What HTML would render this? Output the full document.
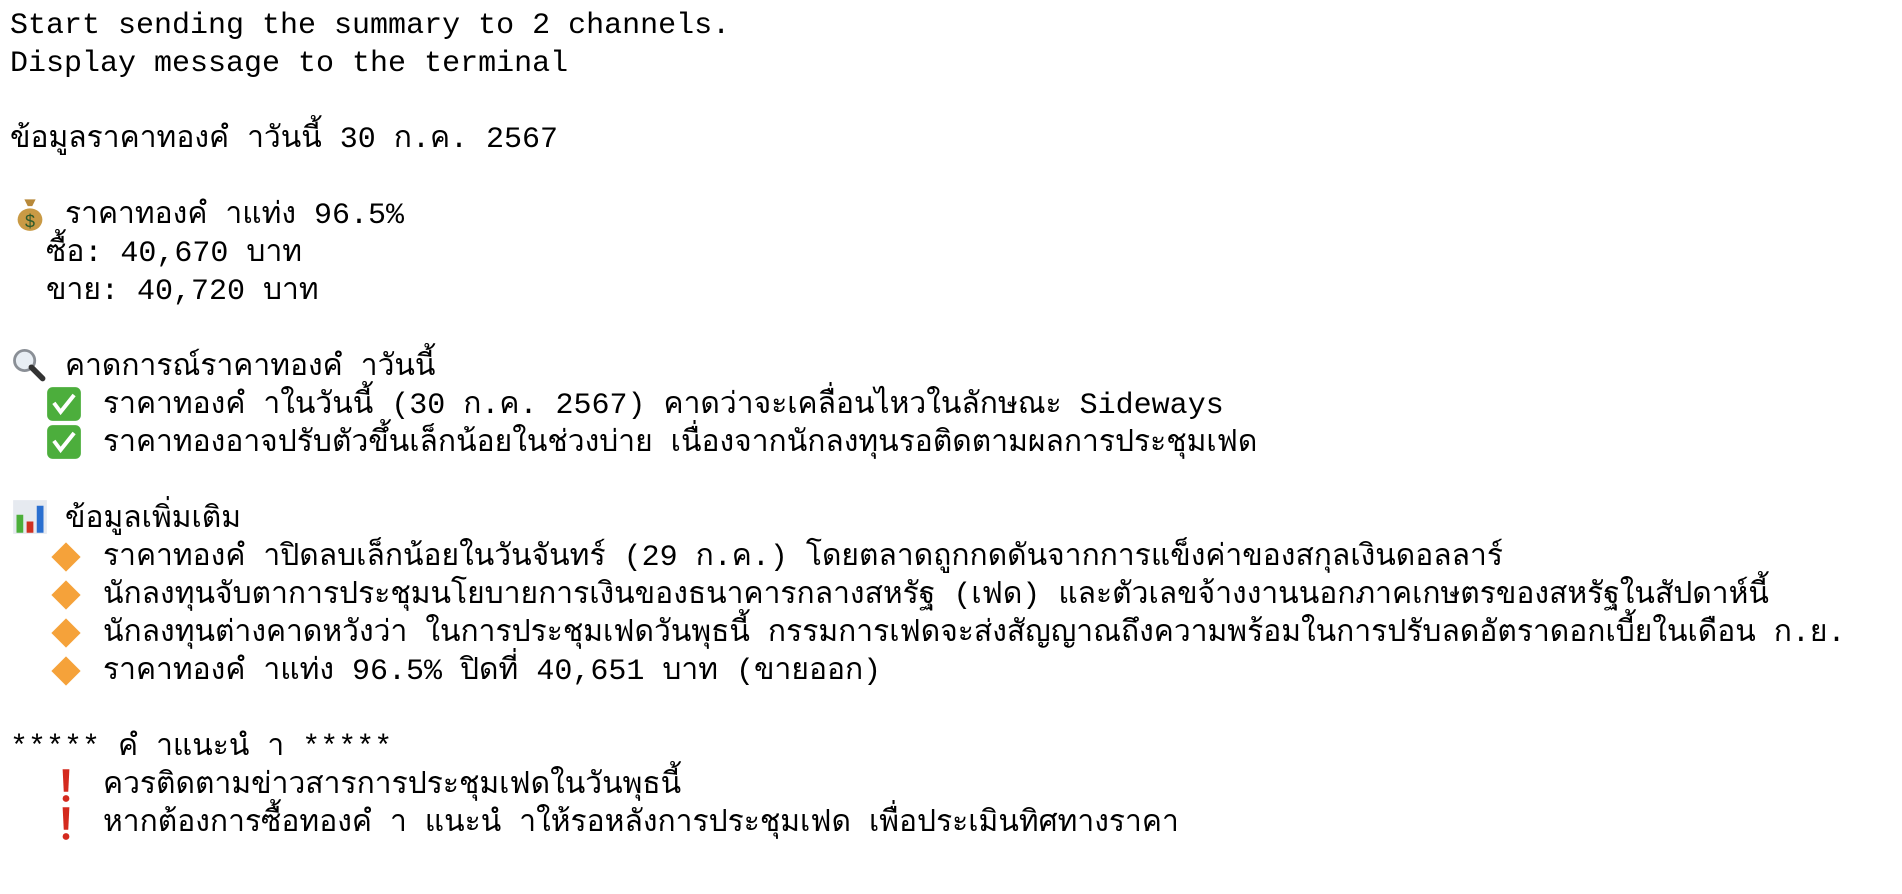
<!DOCTYPE html>
<html><head><meta charset="utf-8"><style>
html,body{margin:0;padding:0;background:#fff;width:1902px;height:894px;overflow:hidden}
.l{position:absolute;white-space:pre;font-family:"Liberation Mono","DejaVu Sans Mono","Noto Sans CJK SC",monospace;font-size:30px;line-height:38px;color:#000;height:38px}
.i{position:absolute;width:36px;height:36px}
</style></head><body>
<div class="l" style="left:10px;top:7px">Start sending the summary to 2 channels.</div>
<div class="l" style="left:10px;top:45px">Display message to the terminal</div>
<div class="l" style="left:10px;top:121px">ข้อมูลราคาทองคํ าวันนี้ 30 ก.ค. 2567</div>

<svg class="i" style="left:12px;top:196px" viewBox="0 0 32 32"><path d="M11 3h10l-3 6h-4z" fill="#b8893a"/><ellipse cx="16" cy="21" rx="11" ry="10" fill="#c99a45"/><text x="16" y="28" font-size="16" text-anchor="middle" fill="#2f5a2a" font-family="Liberation Sans">$</text></svg>
<div class="l" style="left:65px;top:197px">ราคาทองคํ าแท่ง 96.5%</div>
<div class="l" style="left:46px;top:235px">ซื้อ: 40,670 บาท</div>
<div class="l" style="left:46px;top:273px">ขาย: 40,720 บาท</div>

<svg class="i" style="left:10px;top:347px" viewBox="0 0 32 32"><circle cx="13" cy="12" r="9" fill="#e8eef4" stroke="#8a8f96" stroke-width="2.5"/><path d="M19 18l10 10" stroke="#333" stroke-width="5" stroke-linecap="round"/></svg>
<div class="l" style="left:65px;top:349px">คาดการณ์ราคาทองคํ าวันนี้</div>
<svg class="i" style="left:46px;top:386px" viewBox="0 0 32 32"><rect x="1" y="1" width="30" height="30" rx="5" fill="#4cae3c"/><path d="M7 15l6 8 12-15" stroke="#fff" stroke-width="3.5" fill="none"/></svg>
<div class="l" style="left:103px;top:387px">ราคาทองคํ าในวันนี้ (30 ก.ค. 2567) คาดว่าจะเคลื่อนไหวในลักษณะ Sideways</div>
<svg class="i" style="left:46px;top:424px" viewBox="0 0 32 32"><rect x="1" y="1" width="30" height="30" rx="5" fill="#4cae3c"/><path d="M7 15l6 8 12-15" stroke="#fff" stroke-width="3.5" fill="none"/></svg>
<div class="l" style="left:103px;top:425px">ราคาทองอาจปรับตัวขึ้นเล็กน้อยในช่วงบ่าย เนื่องจากนักลงทุนรอติดตามผลการประชุมเฟด</div>

<svg class="i" style="left:12px;top:499px" viewBox="0 0 32 32"><rect x="1" y="1" width="30" height="30" fill="#e6eaf0"/><rect x="4" y="14" width="6" height="16" fill="#4caf3a"/><rect x="13" y="20" width="6" height="10" fill="#d03020"/><rect x="22" y="6" width="6" height="24" fill="#2a6fd0"/></svg>
<div class="l" style="left:65px;top:501px">ข้อมูลเพิ่มเติม</div>
<svg class="i" style="left:48px;top:539px" viewBox="0 0 32 32"><path d="M16 3l13 13-13 13-13-13z" fill="#f5a23a"/></svg>
<div class="l" style="left:103px;top:539px">ราคาทองคํ าปิดลบเล็กน้อยในวันจันทร์ (29 ก.ค.) โดยตลาดถูกกดดันจากการแข็งค่าของสกุลเงินดอลลาร์</div>
<svg class="i" style="left:48px;top:577px" viewBox="0 0 32 32"><path d="M16 3l13 13-13 13-13-13z" fill="#f5a23a"/></svg>
<div class="l" style="left:103px;top:577px">นักลงทุนจับตาการประชุมนโยบายการเงินของธนาคารกลางสหรัฐ (เฟด) และตัวเลขจ้างงานนอกภาคเกษตรของสหรัฐในสัปดาห์นี้</div>
<svg class="i" style="left:48px;top:615px" viewBox="0 0 32 32"><path d="M16 3l13 13-13 13-13-13z" fill="#f5a23a"/></svg>
<div class="l" style="left:103px;top:615px">นักลงทุนต่างคาดหวังว่า ในการประชุมเฟดวันพุธนี้ กรรมการเฟดจะส่งสัญญาณถึงความพร้อมในการปรับลดอัตราดอกเบี้ยในเดือน ก.ย.</div>
<svg class="i" style="left:48px;top:653px" viewBox="0 0 32 32"><path d="M16 3l13 13-13 13-13-13z" fill="#f5a23a"/></svg>
<div class="l" style="left:103px;top:653px">ราคาทองคํ าแท่ง 96.5% ปิดที่ 40,651 บาท (ขายออก)</div>

<div class="l" style="left:10px;top:729px">***** คํ าแนะนํ า *****</div>
<svg class="i" style="left:48px;top:767px" viewBox="0 0 32 32"><path d="M13 2h6l-1 20h-4z" fill="#d42a1e"/><circle cx="16" cy="28" r="3" fill="#d42a1e"/></svg>
<div class="l" style="left:103px;top:767px">ควรติดตามข่าวสารการประชุมเฟดในวันพุธนี้</div>
<svg class="i" style="left:48px;top:805px" viewBox="0 0 32 32"><path d="M13 2h6l-1 20h-4z" fill="#d42a1e"/><circle cx="16" cy="28" r="3" fill="#d42a1e"/></svg>
<div class="l" style="left:103px;top:805px">หากต้องการซื้อทองคํ า แนะนํ าให้รอหลังการประชุมเฟด เพื่อประเมินทิศทางราคา</div>
</body></html>
